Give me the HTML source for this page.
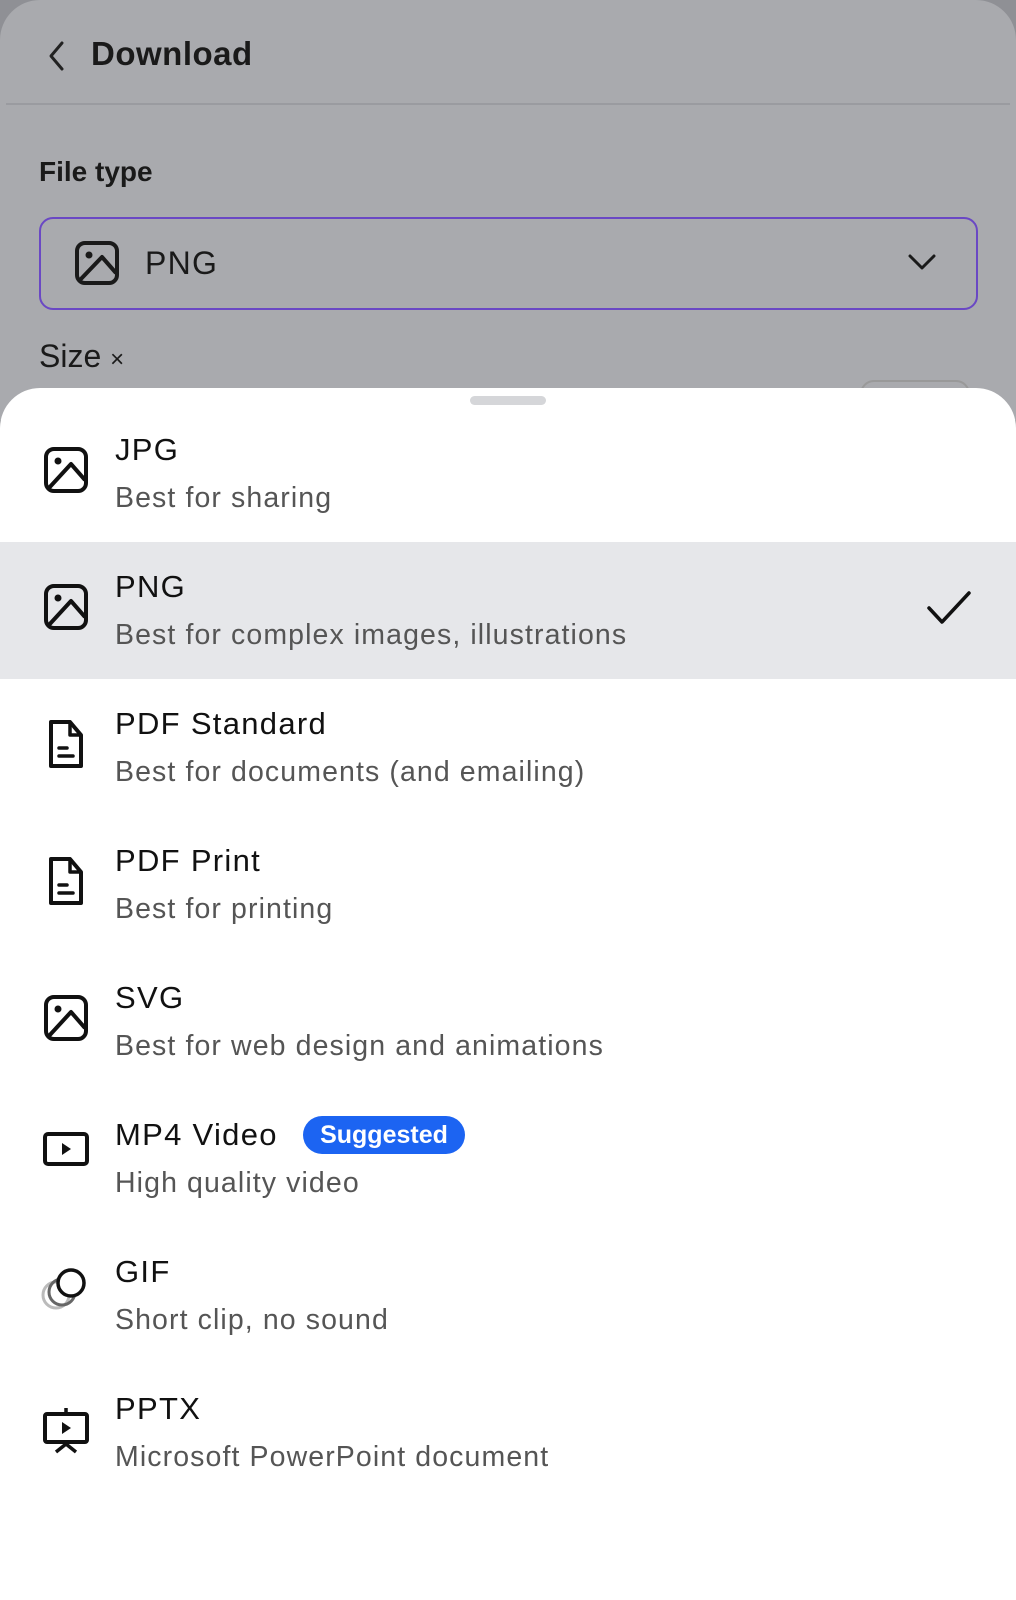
<!DOCTYPE html>
<html><head><meta charset="utf-8"><style>
*{margin:0;padding:0;box-sizing:border-box}
body{width:1016px;height:1600px;background:#8f9095;font-family:"Liberation Sans",sans-serif;position:relative;overflow:hidden}
.top{position:absolute;left:0;top:0;width:1016px;height:420px;background:#a9aaae;border-radius:40px 40px 0 0}
.abs{position:absolute}
.sheet{position:absolute;left:0;top:388px;width:1016px;height:1212px;background:#fff;border-radius:40px 40px 0 0}
.row{position:absolute;left:0;width:1016px;height:137px}
.t{position:absolute;left:115px;font-size:31px;color:#111;line-height:36px;letter-spacing:1.3px}
.s{position:absolute;left:115px;font-size:28.5px;color:#555;line-height:34px;letter-spacing:1.1px}
.ic{position:absolute;left:42px;width:48px;height:48px}
</style></head><body>
<div class="top">
 <svg class="abs" style="left:46px;top:40px" width="22" height="32" viewBox="0 0 22 32"><path d="M16 3 L5 16 L16 29" fill="none" stroke="#222" stroke-width="3" stroke-linecap="round" stroke-linejoin="round"/></svg>
 <div class="abs" style="left:91px;top:35px;font-size:33px;font-weight:bold;color:#1a1a1a;letter-spacing:0.5px">Download</div>
 <div class="abs" style="left:6px;top:103px;width:1004px;height:2px;background:#9a9ba0"></div>
 <div class="abs" style="left:39px;top:156px;font-size:28px;font-weight:bold;color:#1a1a1a">File type</div>
 <div class="abs" style="left:39px;top:217px;width:939px;height:93px;border:2.5px solid #6a48c4;border-radius:14px"></div>
 <svg class="abs" style="left:74px;top:240px" width="46" height="46" viewBox="0 0 46 46"><rect x="3" y="3" width="40" height="40" rx="8" fill="none" stroke="#1a1a1a" stroke-width="4"/><circle cx="15" cy="15" r="3.5" fill="#1a1a1a"/><path d="M5 41 L28 17 L42 33" fill="none" stroke="#1a1a1a" stroke-width="4" stroke-linejoin="round"/></svg>
 <div class="abs" style="left:145px;top:245px;font-size:32px;color:#1a1a1a;letter-spacing:1.3px">PNG</div>
 <svg class="abs" style="left:907px;top:252px" width="30" height="20" viewBox="0 0 30 20"><path d="M3 4 L15 16 L27 4" fill="none" stroke="#1a1a1a" stroke-width="3" stroke-linecap="round" stroke-linejoin="round"/></svg>
 <div class="abs" style="left:39px;top:338px;font-size:32px;color:#1a1a1a">Size <span style="font-size:24px">×</span></div>
 <div class="abs" style="left:860px;top:380px;width:110px;height:30px;border:2px solid #999;border-radius:14px"></div>
</div>
<div class="sheet">
 <div class="abs" style="left:470px;top:8px;width:76px;height:9px;border-radius:5px;background:#d5d6d9"></div>
</div>
<div class="row" style="top:405px">
 <svg class="ic" style="top:41px" viewBox="0 0 48 48"><rect x="4" y="3" width="40" height="42" rx="8" fill="none" stroke="#111" stroke-width="4"/><circle cx="16" cy="15" r="3.5" fill="#111"/><path d="M6 43 L29 18 L43 34" fill="none" stroke="#111" stroke-width="4" stroke-linejoin="round"/></svg>
 <div class="t" style="top:27px">JPG</div><div class="s" style="top:76px">Best for sharing</div>
</div>
<div class="row" style="top:542px;background:#e6e7ea">
 <svg class="ic" style="top:41px" viewBox="0 0 48 48"><rect x="4" y="3" width="40" height="42" rx="8" fill="none" stroke="#111" stroke-width="4"/><circle cx="16" cy="15" r="3.5" fill="#111"/><path d="M6 43 L29 18 L43 34" fill="none" stroke="#111" stroke-width="4" stroke-linejoin="round"/></svg>
 <div class="t" style="top:27px">PNG</div><div class="s" style="top:76px">Best for complex images, illustrations</div>
 <svg class="abs" style="left:926px;top:48px" width="46" height="36" viewBox="0 0 46 36"><path d="M3 18 L16 32 L43 3" fill="none" stroke="#111" stroke-width="3.5" stroke-linecap="round" stroke-linejoin="round"/></svg>
</div>
<div class="row" style="top:679px">
 <svg class="ic" style="top:40px;height:50px" viewBox="0 0 48 50"><path d="M9 3 H28 L39 16 V47 H9 Z" fill="none" stroke="#111" stroke-width="4" stroke-linejoin="round"/><path d="M28 3 V16 H39" fill="none" stroke="#111" stroke-width="3.5" stroke-linejoin="round"/><path d="M17 29 H25 M17 37 H31" stroke="#111" stroke-width="3.5" stroke-linecap="round"/></svg>
 <div class="t" style="top:27px">PDF Standard</div><div class="s" style="top:76px">Best for documents (and emailing)</div>
</div>
<div class="row" style="top:816px">
 <svg class="ic" style="top:40px;height:50px" viewBox="0 0 48 50"><path d="M9 3 H28 L39 16 V47 H9 Z" fill="none" stroke="#111" stroke-width="4" stroke-linejoin="round"/><path d="M28 3 V16 H39" fill="none" stroke="#111" stroke-width="3.5" stroke-linejoin="round"/><path d="M17 29 H25 M17 37 H31" stroke="#111" stroke-width="3.5" stroke-linecap="round"/></svg>
 <div class="t" style="top:27px">PDF Print</div><div class="s" style="top:76px">Best for printing</div>
</div>
<div class="row" style="top:953px">
 <svg class="ic" style="top:41px" viewBox="0 0 48 48"><rect x="4" y="3" width="40" height="42" rx="8" fill="none" stroke="#111" stroke-width="4"/><circle cx="16" cy="15" r="3.5" fill="#111"/><path d="M6 43 L29 18 L43 34" fill="none" stroke="#111" stroke-width="4" stroke-linejoin="round"/></svg>
 <div class="t" style="top:27px">SVG</div><div class="s" style="top:76px">Best for web design and animations</div>
</div>
<div class="row" style="top:1090px">
 <svg class="ic" style="top:37px" viewBox="0 0 48 48"><rect x="3" y="7" width="42" height="30" rx="3" fill="none" stroke="#111" stroke-width="4"/><path d="M20 16 L29 22 L20 28 Z" fill="#111"/></svg>
 <div class="t" style="top:27px">MP4 Video</div>
 <div class="abs" style="left:303px;top:26px;width:162px;height:38px;border-radius:19px;background:#1c64f2;color:#fff;font-size:25px;font-weight:bold;line-height:38px;text-align:center">Suggested</div>
 <div class="s" style="top:76px">High quality video</div>
</div>
<div class="row" style="top:1227px">
 <svg class="ic" style="top:36px;width:52px;height:52px;left:40px" viewBox="0 0 52 52"><circle cx="16" cy="32" r="13" fill="none" stroke="#bbb" stroke-width="3"/><circle cx="22" cy="29" r="13" fill="none" stroke="#666" stroke-width="3"/><circle cx="31" cy="20" r="13" fill="#fff" stroke="#111" stroke-width="3.5"/></svg>
 <div class="t" style="top:27px">GIF</div><div class="s" style="top:76px">Short clip, no sound</div>
</div>
<div class="row" style="top:1364px">
 <svg class="ic" style="top:42px" viewBox="0 0 48 48"><path d="M24 2 V8" stroke="#111" stroke-width="3.5"/><rect x="3" y="8" width="42" height="28" rx="2" fill="none" stroke="#111" stroke-width="4"/><path d="M20 16 L29 22 L20 28 Z" fill="#111"/><path d="M14 46 L24 38 L34 46" fill="none" stroke="#111" stroke-width="3.5"/></svg>
 <div class="t" style="top:27px">PPTX</div><div class="s" style="top:76px">Microsoft PowerPoint document</div>
</div>
</body></html>
